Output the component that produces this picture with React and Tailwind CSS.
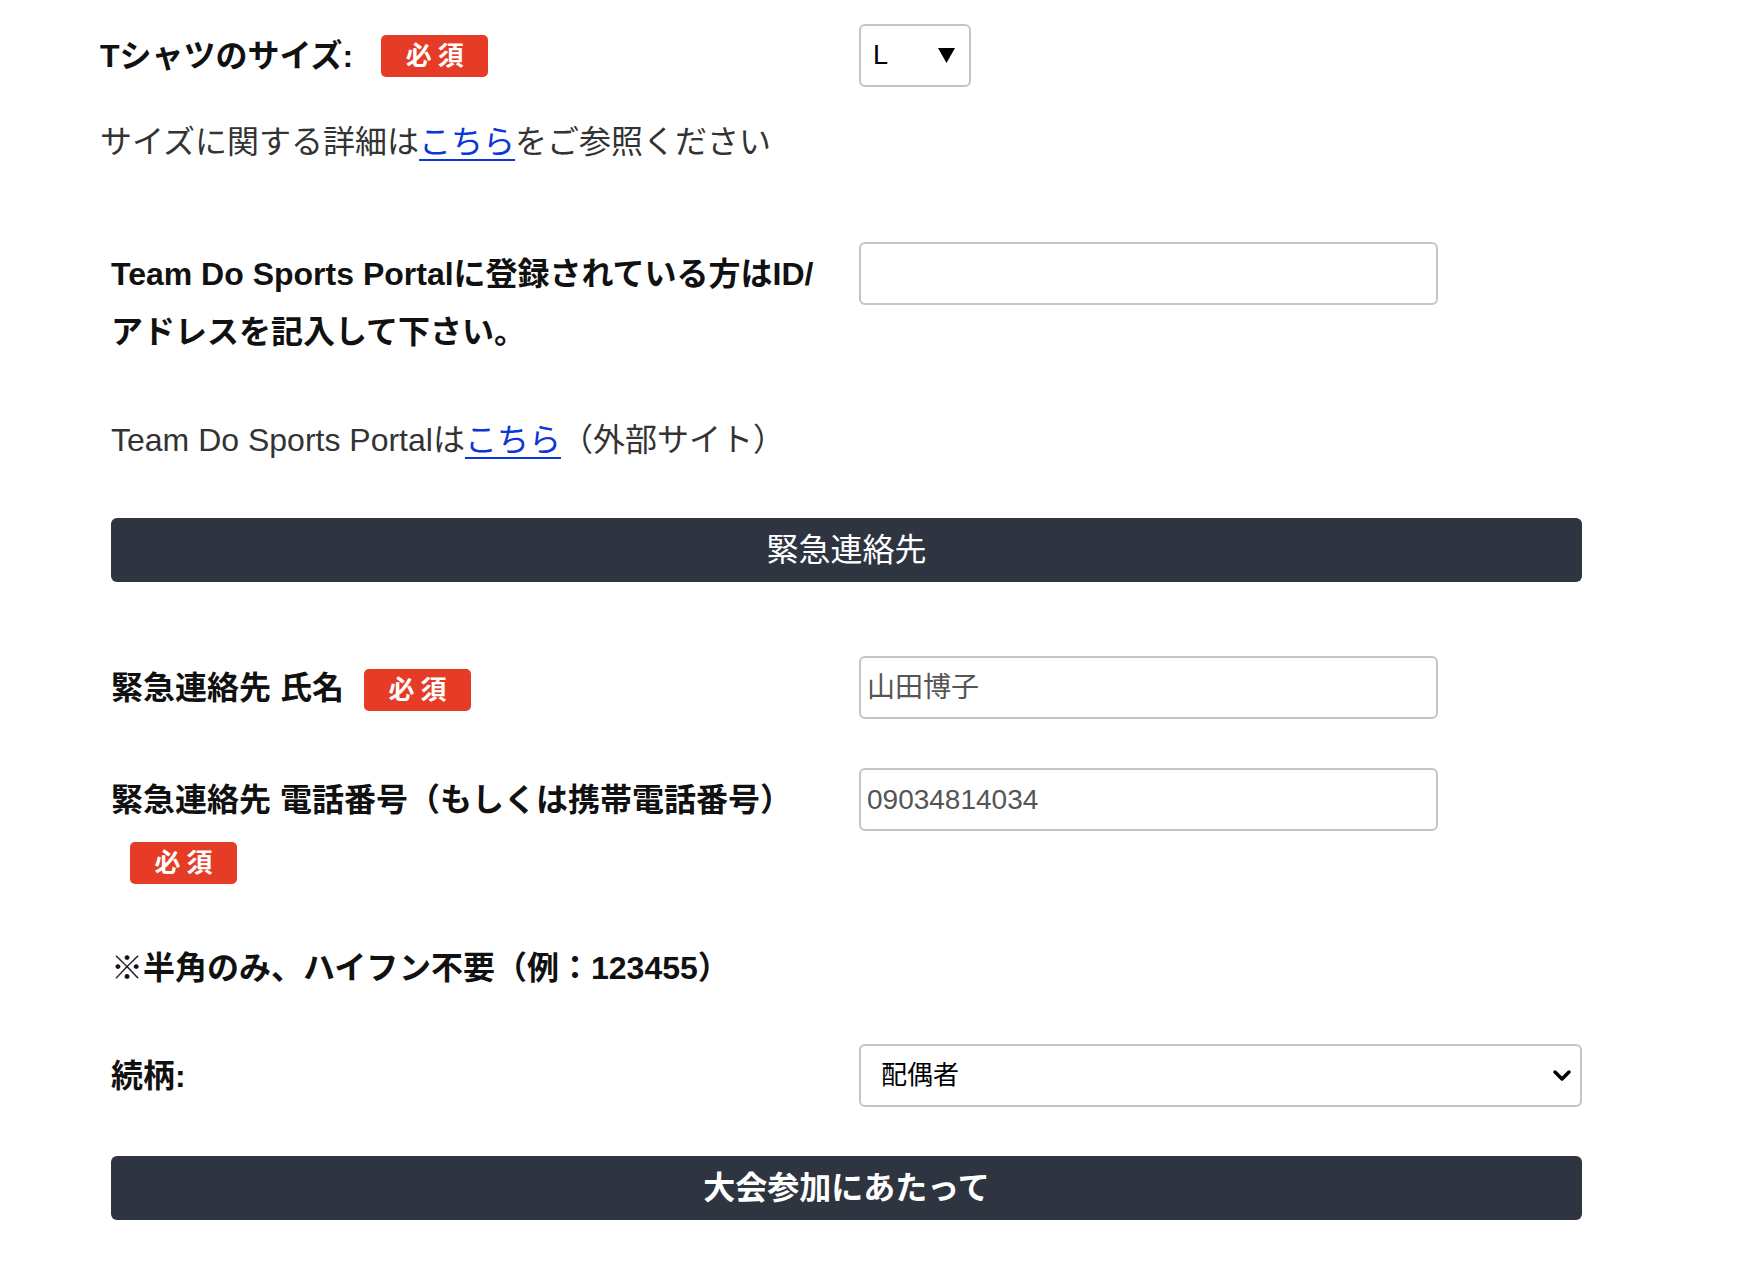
import React from 'react';

const FONT = { fontFamily: '"Liberation Sans", "Noto Sans CJK JP", sans-serif' };

// Red "必須" tag
const Required = ({ className = '' }) => (
  <span
    className={`inline-flex items-center justify-center w-[107px] h-[42px] rounded-[5px] bg-[#e63b26] text-white text-[26px] font-bold tracking-[6px] pl-[6px] leading-none ${className}`}
  >
    必須
  </span>
);

const TextInput = ({ value }) => (
  <div className="w-[579px] h-[63px] shrink-0 border-2 border-[#c4c4c4] rounded-[6px] flex items-center px-[6px] text-[28px] text-[#555]">
    {value}
  </div>
);

const Bar = ({ children, bold }) => (
  <div
    className={`h-[64px] w-[1471px] rounded-[6px] bg-[#2e3440] text-white text-[32px] flex items-center justify-center ${
      bold ? 'font-bold' : ''
    }`}
  >
    {children}
  </div>
);

export default function App() {
  return (
    <div className="bg-white w-[1744px] min-h-[1266px] pl-[100px] pt-[24px] pb-[46px]" style={FONT}>
      {/* T-shirt size */}
      <div className="flex items-center">
        <div className="w-[759px] flex items-center gap-[28px]">
          <span className="text-[32px] font-bold text-[#111]">Tシャツのサイズ:</span>
          <Required />
        </div>
        <div className="w-[112px] h-[63px] border-2 border-[#c4c4c4] rounded-[6px] flex items-center justify-between pl-[12px] pr-[14px]">
          <span className="text-[27px] text-black">L</span>
          <svg width="17" height="15" viewBox="0 0 17 15">
            <path d="M0 0h17L8.5 15z" fill="#000" />
          </svg>
        </div>
      </div>
      <p className="mt-[31px] text-[32px] leading-[48px] text-[#333]">
        サイズに関する詳細は
        <a href="#" className="text-[#0b36d8] underline underline-offset-[6px] decoration-2">
          こちら
        </a>
        をご参照ください
      </p>

      <div className="pl-[11px]">
        {/* Portal ID */}
        <div className="mt-[76px] flex items-start">
          <div className="w-[748px] mt-[3px] text-[32px] leading-[58px] font-bold text-[#111]">
            Team Do Sports Portalに登録されている方はID/
            <br />
            アドレスを記入して下さい。
          </div>
          <TextInput value="" />
        </div>
        <p className="mt-[55px] text-[32px] leading-[48px] text-[#333]">
          Team Do Sports Portalは
          <a href="#" className="text-[#0b36d8] underline underline-offset-[6px] decoration-2">
            こちら
          </a>
          （外部サイト）
        </p>

        <div className="mt-[54px]">
          <Bar>緊急連絡先</Bar>
        </div>

        {/* Emergency contact name */}
        <div className="mt-[74px] flex items-center">
          <div className="w-[748px] flex items-center gap-[20px]">
            <span className="text-[32px] font-bold text-[#111]">緊急連絡先 氏名</span>
            <Required className="mt-[4px]" />
          </div>
          <TextInput value="山田博子" />
        </div>

        {/* Emergency contact phone */}
        <div className="mt-[49px] flex items-start">
          <div className="w-[748px] pt-[8px]">
            <div className="text-[32px] leading-[48px] font-bold text-[#111]">
              緊急連絡先 電話番号（もしくは携帯電話番号）
            </div>
            <Required className="mt-[18px] ml-[19px]" />
          </div>
          <TextInput value="09034814034" />
        </div>

        <p className="mt-[60px] text-[32px] leading-[48px] font-bold text-[#111]">
          ※半角のみ、ハイフン不要（例：123455）
        </p>

        {/* Relationship */}
        <div className="mt-[52px] flex items-center">
          <div className="w-[748px] text-[32px] font-bold text-[#111]">続柄:</div>
          <div className="w-[723px] h-[63px] border-2 border-[#c4c4c4] rounded-[6px] flex items-center justify-between pl-[20px] pr-[8px]">
            <span className="text-[26px] text-black">配偶者</span>
            <svg width="20" height="14" viewBox="0 0 20 14" fill="none">
              <path d="M3 3l7 7 7-7" stroke="#000" strokeWidth="3.5" strokeLinecap="round" strokeLinejoin="round" />
            </svg>
          </div>
        </div>

        <div className="mt-[49px]">
          <Bar bold>大会参加にあたって</Bar>
        </div>
      </div>
    </div>
  );
}
